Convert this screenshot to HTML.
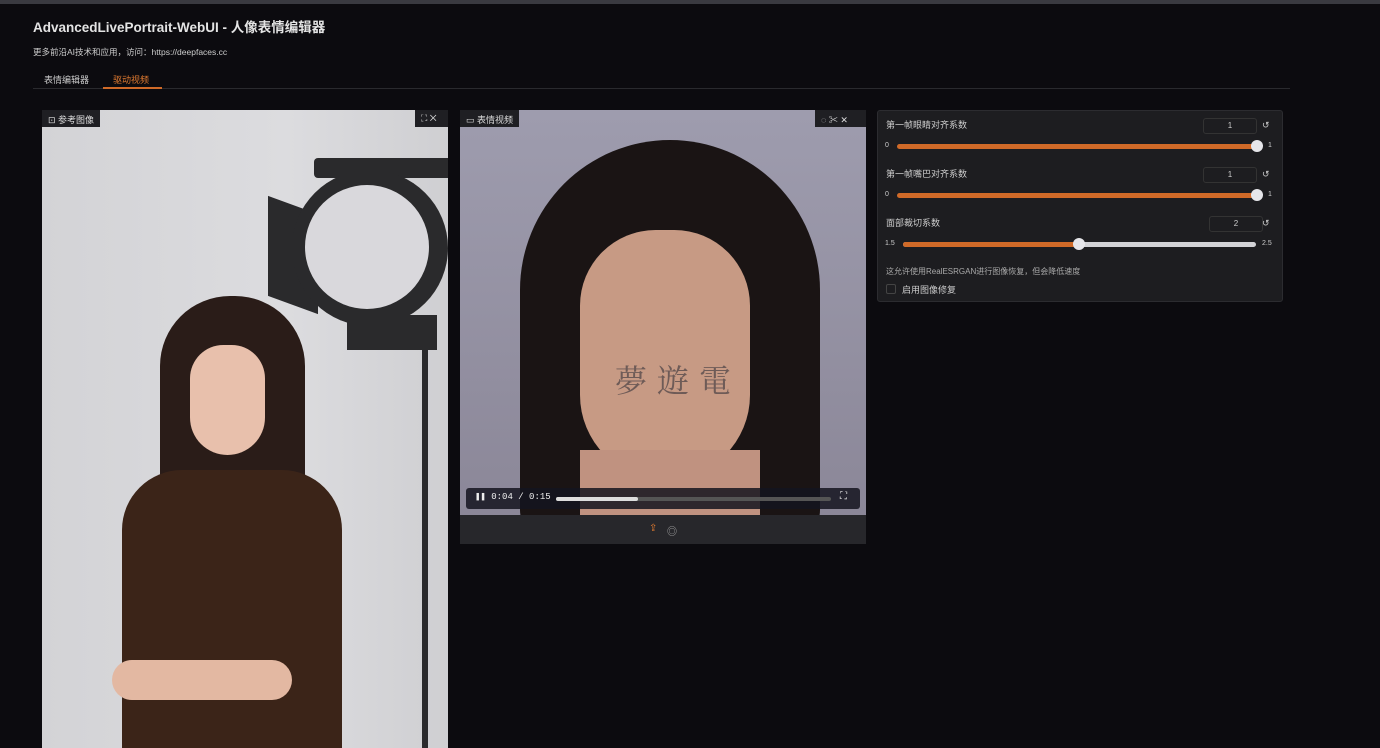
<!DOCTYPE html>
<html><head><meta charset="utf-8"><style>
*{margin:0;padding:0;box-sizing:border-box}
body{width:1380px;height:748px;background:#0c0b0f;font-family:"Liberation Sans","Noto Sans CJK SC",sans-serif;color:#ddd;position:relative;overflow:hidden}
.a{position:absolute}
.lbl{background:#1f1f23;color:#ddd;font-size:9px;padding:3px 6px;height:17px}
.slider{height:5px;border-radius:3px}
.num{border:1px solid #333;border-radius:3px;width:54px;height:16px;font-size:8px;text-align:center;line-height:14px;color:#ccc}
.knob{width:12px;height:12px;border-radius:50%;background:#e6e6ea}
.t{font-size:9px;color:#ccc}
</style></head><body>
<div class="a" style="left:0;top:0;width:1380px;height:4px;background:#3a3a40"></div>
<div class="a" style="left:33px;top:16px;font-size:13.5px;font-weight:bold;color:#e4e4e4">AdvancedLivePortrait-WebUI - 人像表情编辑器</div>
<div class="a" style="left:33px;top:46px;font-size:8.5px;color:#ccc">更多前沿AI技术和应用，访问：https://deepfaces.cc</div>
<div class="a" style="left:44px;top:73px;font-size:9px;color:#ccc">表情编辑器</div>
<div class="a" style="left:113px;top:73px;font-size:9px;color:#e07a30">驱动视频</div>
<div class="a" style="left:33px;top:88px;width:1257px;height:1px;background:#2a2a2e"></div>
<div class="a" style="left:103px;top:87px;width:59px;height:2px;background:#d06a28"></div>

<div class="a" style="left:42px;top:110px;width:406px;height:638px;background:linear-gradient(90deg,#d3d3d6,#dcdcdf 60%,#cfcfd2);overflow:hidden">
 <div class="a" style="left:272px;top:48px;width:140px;height:20px;background:#2a2a2c;border-radius:4px"></div>
 <div class="a" style="left:226px;top:95px;width:50px;height:100px;background:#2a2a2c;transform:skewY(20deg)"></div>
 <div class="a" style="left:250px;top:60px;width:156px;height:156px;border-radius:50%;background:#2a2a2c"></div>
 <div class="a" style="left:263px;top:75px;width:124px;height:124px;border-radius:50%;background:#d9d8dc"></div>
 <div class="a" style="left:305px;top:205px;width:90px;height:35px;background:#2a2a2c"></div>
 <div class="a" style="left:380px;top:230px;width:6px;height:408px;background:#2a2a2c"></div>
 <div class="a" style="left:118px;top:186px;width:145px;height:250px;border-radius:70px 70px 20px 20px;background:#2a1c18"></div>
 <div class="a" style="left:148px;top:235px;width:75px;height:110px;border-radius:40px 40px 45px 45px;background:#e8c0ac"></div>
 <div class="a" style="left:80px;top:360px;width:220px;height:280px;border-radius:60px 60px 0 0;background:#3b2418"></div>
 <div class="a" style="left:70px;top:550px;width:180px;height:40px;border-radius:20px;background:#e3b8a2"></div>
</div>
<div class="a lbl" style="left:42px;top:110px">⊡ 参考图像</div>
<div class="a lbl" style="left:415px;top:110px;width:33px">⛶ ✕</div>

<div class="a" style="left:460px;top:110px;width:406px;height:405px;background:linear-gradient(180deg,#9e9cae,#8b8798);overflow:hidden">
 <div class="a" style="left:60px;top:30px;width:300px;height:400px;border-radius:150px 150px 30px 30px;background:#1a1414"></div>
 <div class="a" style="left:120px;top:120px;width:170px;height:250px;border-radius:80px 80px 90px 90px;background:#c79a84"></div>
 <div class="a" style="left:120px;top:340px;width:180px;height:80px;background:#c09280"></div>
 <div class="a" style="left:155px;top:246px;font-size:32px;color:#6e5b57;letter-spacing:10px;font-family:'Noto Serif CJK SC',serif">夢遊電</div>
</div>
<div class="a lbl" style="left:460px;top:110px">▭ 表情视频</div>
<div class="a lbl" style="left:815px;top:110px;width:51px">◌ ✂ ✕</div>
<div class="a" style="left:466px;top:488px;width:394px;height:21px;background:rgba(20,20,30,.85);border-radius:3px"></div>
<div class="a" style="left:475px;top:492px;font-size:9px;color:#eee;font-family:'Liberation Mono',monospace">❚❚ 0:04 / 0:15</div>
<div class="a" style="left:556px;top:497px;width:275px;height:4px;background:#555;border-radius:2px"></div>
<div class="a" style="left:556px;top:497px;width:82px;height:4px;background:#ddd;border-radius:2px"></div>
<div class="a" style="left:840px;top:491px;font-size:10px;color:#eee">⛶</div>
<div class="a" style="left:460px;top:515px;width:406px;height:29px;background:#27272b"></div>
<div class="a" style="left:649px;top:523px;font-size:10px;color:#e07a30">⇪</div>
<div class="a" style="left:667px;top:523px;font-size:10px;color:#aaa">◎</div>

<div class="a" style="left:877px;top:110px;width:406px;height:192px;background:#1d1d20;border:1px solid #2c2c30;border-radius:3px"></div>
<div class="a t" style="left:886px;top:118px">第一帧眼睛对齐系数</div>
<div class="a num" style="left:1203px;top:118px">1</div><div class="a t" style="left:1262px;top:120px">↺</div>
<div class="a t" style="left:885px;top:142px;font-size:7px">0</div>
<div class="a slider" style="left:897px;top:144px;width:360px;background:#d06a28"></div>
<div class="a knob" style="left:1251px;top:140px"></div>
<div class="a t" style="left:1268px;top:142px;font-size:7px">1</div>

<div class="a t" style="left:886px;top:167px">第一帧嘴巴对齐系数</div>
<div class="a num" style="left:1203px;top:167px">1</div><div class="a t" style="left:1262px;top:169px">↺</div>
<div class="a t" style="left:885px;top:191px;font-size:7px">0</div>
<div class="a slider" style="left:897px;top:193px;width:360px;background:#d06a28"></div>
<div class="a knob" style="left:1251px;top:189px"></div>
<div class="a t" style="left:1268px;top:191px;font-size:7px">1</div>

<div class="a t" style="left:886px;top:216px">面部裁切系数</div>
<div class="a num" style="left:1209px;top:216px">2</div><div class="a t" style="left:1262px;top:218px">↺</div>
<div class="a t" style="left:885px;top:240px;font-size:7px">1.5</div>
<div class="a slider" style="left:903px;top:242px;width:353px;background:#d2d2d6"></div>
<div class="a slider" style="left:903px;top:242px;width:176px;background:#d06a28"></div>
<div class="a knob" style="left:1073px;top:238px"></div>
<div class="a t" style="left:1262px;top:240px;font-size:7px">2.5</div>

<div class="a t" style="left:886px;top:266px;font-size:8px;color:#aaa">这允许使用RealESRGAN进行图像恢复，但会降低速度</div>
<div class="a" style="left:886px;top:284px;width:10px;height:10px;border:1px solid #444;border-radius:2px"></div>
<div class="a t" style="left:902px;top:283px">启用图像修复</div>
</body></html>
